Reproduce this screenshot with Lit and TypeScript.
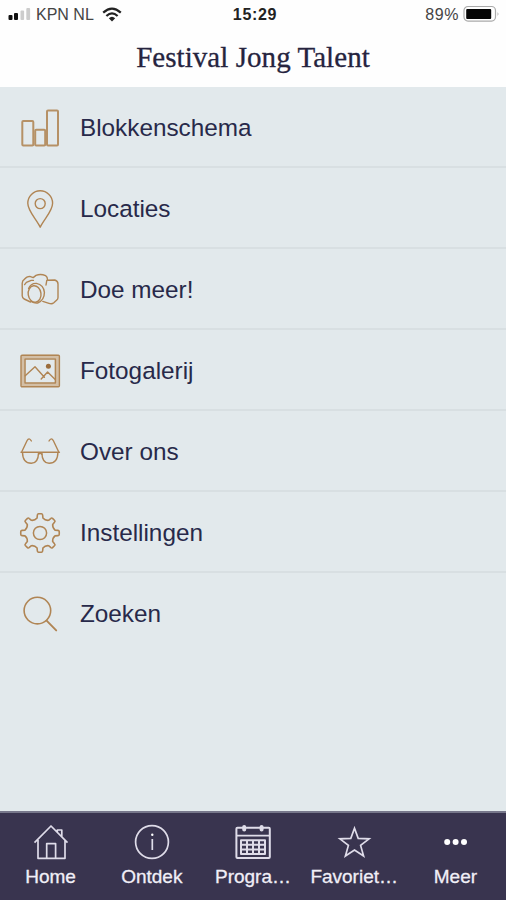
import { LitElement, html, css, svg, type SVGTemplateResult } from "lit";
import { customElement } from "lit/decorators.js";

/** Outline of a cog with rounded teeth, centred in a 44x44 box. */
function gearPath(teeth: number, outer: number, inner: number): string {
  const c = 22;
  const step = 360 / teeth;
  const pt = (r: number, deg: number) => {
    const a = ((deg - 90) * Math.PI) / 180;
    return `${(c + r * Math.cos(a)).toFixed(2)} ${(c + r * Math.sin(a)).toFixed(2)}`;
  };
  let d = "";
  for (let i = 0; i < teeth; i++) {
    const a = i * step;
    d += `${i ? "L" : "M"}${pt(inner + 1.3, a - 11)}L${pt(outer - 1.3, a - 8.5)}Q${pt(outer, a - 8)} ${pt(outer, a - 4.5)}`;
    d += `L${pt(outer, a + 4.5)}Q${pt(outer, a + 8)} ${pt(outer - 1.3, a + 8.5)}L${pt(inner + 1.3, a + 11)}`;
    d += `Q${pt(inner - 0.6, a + step / 2)} ${pt(inner + 1.3, a + step - 11)}`;
  }
  return d + "Z";
}

interface Item {
  label: string;
  icon: SVGTemplateResult;
}

// Menu icons share a 44x44 view box.
const menu: Item[] = [
  {
    label: "Blokkenschema",
    icon: svg`<g stroke-width="2" opacity="0.88"><rect x="4.3" y="14.9" width="11" height="24.6" rx="1"/><rect x="17.2" y="23.8" width="10" height="15.7" rx="1"/><rect x="29" y="4.6" width="11" height="34.9" rx="1"/></g>`,
  },
  {
    label: "Locaties",
    icon: svg`<path d="M22.2 40.2C18.8 32.6 9.8 24.2 9.8 16.2A12.4 12.4 0 0 1 34.6 16.2C34.6 24.2 25.6 32.6 22.2 40.2Z"/><circle cx="22.2" cy="16.6" r="5"/>`,
  },
  {
    label: "Doe meer!",
    icon: svg`<path d="M12.5 34L6.2 31Q4.2 30 4.2 27.8V15.2Q4.2 12.6 6.6 11.2Q8.6 8.4 11.8 8.4L15.2 9.6L18 7.4Q22.5 5.6 27.6 7.6Q29.6 8.8 29.6 12.2L36.8 12Q40 13 40 16V29.4Q40 31 38.8 32L35.8 34.8Q34 36.4 31 35.4L24.8 33.4"/><path d="M6.6 16.6L8.4 14.4L13.2 12.4H15.4M28.8 12.4L28 17"/><ellipse cx="16.6" cy="26" rx="6.4" ry="8.3" transform="rotate(-8 16.6 26)"/><path d="M10.6 20.6Q12.6 15.2 18.4 15.4Q25.8 17 26.4 24.4Q26.4 32 19.6 35Q16.6 35.6 13 33.4"/>`,
  },
  {
    label: "Fotogalerij",
    icon: svg`<rect x="2.8" y="6.1" width="38.8" height="31.6" rx="1" stroke="#d3bfa6" stroke-width="4" transform="translate(2.2 2) scale(.9)"/><rect x="3" y="6.2" width="38.4" height="31.6" rx="1" stroke-width="1.4"/><rect x="7" y="9.9" width="30.4" height="24.2" stroke-width="1.5"/><path d="M7.2 26.8L17 17.8L26.4 28.2M23.2 30L29.6 23L37.2 30.6"/><circle class="dot" cx="30.4" cy="17.2" r="2.5"/>`,
  },
  {
    label: "Over ons",
    icon: svg`<path d="M3 22.3H41.4"/><path d="M4.5 22.6Q4.7 33.3 13.3 33.3Q20.2 33.3 20.6 22.6M23.8 22.6Q24.2 33.3 31.1 33.3Q39.7 33.3 39.9 22.6"/><path d="M3.9 21.5L9 10.8Q11 6.8 13.4 11M40.5 21.5L35.4 10.8Q33.4 6.8 31 11"/><path d="M20.6 24.2Q22.2 22.6 23.8 24.2"/>`,
  },
  {
    label: "Instellingen",
    icon: svg`<path stroke-width="1.6" d=${gearPath(8, 19.3, 14)}/><circle cx="22" cy="22" r="6.6" stroke-width="1.5"/>`,
  },
  {
    label: "Zoeken",
    icon: svg`<circle cx="19.4" cy="18.6" r="13.3" stroke-width="1.6"/><path d="M28.6 28.6L38.2 38.4" stroke-width="1.9"/>`,
  },
];

// Tab icons share a 40x40 view box.
const tabs: Item[] = [
  {
    label: "Home",
    icon: svg`<path d="M3.5 20.6L20 4L36.5 20.6M7 18V36.3H34V18M15.7 36V21.6H24.6V36M26.3 9.8V8H30.8V14.6"/>`,
  },
  {
    label: "Ontdek",
    icon: svg`<circle cx="20" cy="20" r="16.4"/><path d="M20.3 17V28"/><circle class="dot" cx="20.3" cy="12.8" r="1.2"/>`,
  },
  {
    label: "Progra…",
    icon: svg`<rect x="3.4" y="5.8" width="33.4" height="30.2" rx="1" stroke-width="2"/><path d="M3.4 13.6H36.8" stroke-width="1.8"/><path d="M8 18.2H32V32H8ZM14 18.2V32M20 18.2V32M26 18.2V32M8 22.8H32M8 27.4H32" stroke-width="2"/><path d="M11.2 5V7.6M28.6 5V7.6" stroke-width="4" stroke-linecap="round"/>`,
  },
  {
    label: "Favoriet…",
    icon: svg`<path d="M20.5 6.3L24.2 16.4L35.1 16.8L26.6 23.4L29.6 34L20.5 28.1L11.4 34L14.4 23.4L5.9 16.8L16.8 16.4Z" stroke-linejoin="miter"/>`,
  },
  {
    label: "Meer",
    icon: svg`<g class="dots"><circle cx="12.2" cy="20" r="3"/><circle cx="20.6" cy="20" r="3"/><circle cx="29" cy="20" r="3"/></g>`,
  },
];

@customElement("app-root")
export class AppRoot extends LitElement {
  static styles = css`
    :host {
      display: flex;
      flex-direction: column;
      height: 900px;
      background: #e2e9ec;
      font-family: "Liberation Sans", Arial, sans-serif;
      overflow: hidden;
    }
    svg {
      display: block;
      flex: none;
    }
    .top {
      height: 87px;
      background: #fefefe;
      flex: none;
    }
    .status {
      display: grid;
      grid-template-columns: 1fr auto 1fr;
      align-items: center;
      height: 28px;
      padding: 0 6px 0 8px;
      font-size: 16px;
      color: #444;
    }
    .left,
    .right {
      display: flex;
      align-items: center;
    }
    .carrier {
      margin: 1px 8px 0 5px;
    }
    .time {
      font-weight: 700;
      letter-spacing: 0.7px;
      color: #222;
      padding: 1px 0 0 2px;
    }
    .right {
      justify-content: flex-end;
      gap: 4px;
    }
    .percent {
      padding-top: 1px;
      letter-spacing: 0.6px;
    }
    h1 {
      margin: 0;
      height: 59px;
      text-align: center;
      font: 400 29px/58px "Liberation Serif", "Times New Roman", serif;
      letter-spacing: 0.05px;
      -webkit-text-stroke: 0.3px #26243f;
      color: #26243f;
    }
    .menu {
      flex: 1;
      margin: 0;
      padding: 0;
      list-style: none;
    }
    .row {
      display: flex;
      align-items: center;
      gap: 18px;
      height: 81px;
      box-sizing: border-box;
      padding: 3px 18px 0;
      border-bottom: 2px solid #d8dfe2;
      font-size: 24.3px;
      color: #28294a;
    }
    .row:last-child {
      border-bottom-color: transparent;
    }
    .row svg {
      fill: none;
      stroke: #b08554;
      stroke-width: 1.4;
      stroke-linejoin: round;
      stroke-linecap: round;
    }
    .row .dot {
      fill: #9b6d3c;
      stroke: none;
    }
    .tabs {
      display: grid;
      grid-template-columns: repeat(5, 1fr);
      height: 89px;
      box-sizing: border-box;
      flex: none;
      background: #39344f;
      border-top: 2px solid #77778b;
      color: #f1eff7;
    }
    .tab {
      display: flex;
      flex-direction: column;
      align-items: center;
      padding-top: 9px;
      font-size: 19px;
      line-height: 24px;
      white-space: nowrap;
      -webkit-text-stroke: 0.3px #f1eff7;
    }
    .tab svg {
      margin-bottom: 3px;
      fill: none;
      stroke: #dfdce9;
      stroke-width: 1.7;
      stroke-linejoin: round;
    }
    .tab .dot,
    .tab .dots {
      fill: #fff;
      stroke: none;
    }
  `;

  render() {
    return html`
      <header class="top">
        <div class="status">
          <div class="left">
            <svg width="23" height="14" viewBox="0 0 23 14">
              <rect x="0.5" y="8" width="4" height="5" rx="1" fill="#111" />
              <rect x="6" y="6" width="4" height="7" rx="1" fill="#111" />
              <rect x="12.5" y="3.5" width="3.6" height="9.5" rx="1" fill="#ccc" />
              <rect x="18.3" y="1" width="3.8" height="12" rx="1" fill="#ccc" />
            </svg>
            <span class="carrier">KPN NL</span>
            <svg width="20" height="15" viewBox="0 0 20 15" fill="none" stroke="#222" stroke-width="2.2">
              <path d="M1.2 5.6Q10-2.4 18.8 5.6M4.4 9Q10 3.6 15.6 9" />
              <path d="M6.8 11.2Q10 8.2 13.2 11.2L10 14.4Z" fill="#222" stroke="none" />
            </svg>
          </div>
          <span class="time">15:29</span>
          <div class="right">
            <span class="percent">89%</span>
            <svg width="37" height="18" viewBox="0 0 37 18">
              <rect x="1" y="1.5" width="31.5" height="14.6" rx="4" fill="none" stroke="#aaa" stroke-width="1.2" />
              <rect x="3.2" y="4" width="25" height="10" rx="1" fill="#050505" />
              <path d="M34.6 7V11Q36.4 9 34.6 7Z" fill="#999" />
            </svg>
          </div>
        </div>
        <h1>Festival Jong Talent</h1>
      </header>
      <ul class="menu">
        ${menu.map(
          (m) => html`<li class="row">
            <svg width="44" height="44" viewBox="0 0 44 44">${m.icon}</svg>
            <span>${m.label}</span>
          </li>`
        )}
      </ul>
      <nav class="tabs">
        ${tabs.map(
          (t) => html`<div class="tab">
            <svg width="40" height="40" viewBox="0 0 40 40">${t.icon}</svg>
            <span>${t.label}</span>
          </div>`
        )}
      </nav>
    `;
  }
}
